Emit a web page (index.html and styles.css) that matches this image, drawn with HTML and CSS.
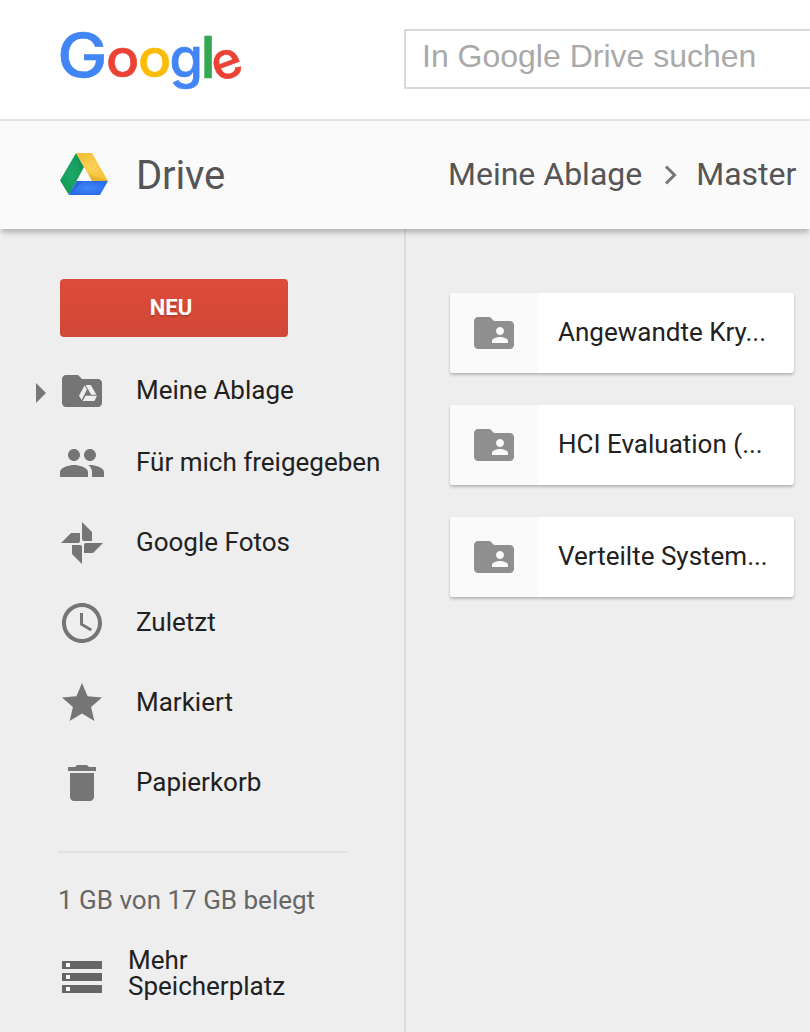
FILE: index.html
```html
<!DOCTYPE html>
<html lang="de">
<head>
<meta charset="utf-8">
<title>Master - Google Drive</title>
<link rel="stylesheet" href="styles.css">
</head>
<body>
<header class="topbar">
  <svg class="wordmark" width="190" height="80" viewBox="58 17 190 80" role="img" aria-label="Google">
    <text class="blue" transform="translate(57.200 77.300) scale(1.110 1)" font-size="60.500">G</text>
    <text class="red" transform="translate(106 77.400) scale(1.040 1)" font-size="53">o</text>
    <text class="yellow" transform="translate(138 77.400) scale(1.040 1)" font-size="53">o</text>
    <text class="blue" transform="translate(169.600 76.800) scale(1.040 1.060)" font-size="52">g</text>
    <text class="green" transform="translate(200.300 77.600) scale(1.080 1)" font-size="58">l</text>
    <text class="red" transform="translate(217.400 82.400) rotate(-20)" font-size="51">e</text>
  </svg>
  <div class="search">In Google Drive suchen</div>
</header>
<div class="toolbar">
  <div class="brand">
    <svg width="48" height="42" viewBox="0 0 48 42">
      <defs>
        <radialGradient id="g"><stop offset="0" stop-color="#1fa768"/><stop offset="1" stop-color="#129a59"/></radialGradient>
        <radialGradient id="y"><stop offset="0" stop-color="#ffd25a"/><stop offset="1" stop-color="#f5c138"/></radialGradient>
        <radialGradient id="b"><stop offset="0" stop-color="#4186fa"/><stop offset="1" stop-color="#2c6ee8"/></radialGradient>
      </defs>
      <path fill="url(#g)" d="M16 0 24 14 9 42 0 27.500z"/>
      <path fill="#0d7c48" opacity=".3" d="M16 0 24 14 21 18z"/>
      <path fill="url(#y)" d="M16 0H32L48 28H32z"/>
      <path fill="#d9a526" opacity=".5" d="M28.500 21 48 28H32z"/>
      <path fill="url(#b)" d="M16.500 28H48L40 42H9z"/>
      <path fill="#1c50bb" opacity=".35" d="M16.500 28H23L9 42z"/>
    </svg>
    <span class="product">Drive</span>
  </div>
  <nav class="crumbs">
    <span>Meine Ablage</span>
    <svg width="14" height="20" viewBox="0 0 14 20"><path d="M2 1.500 10.500 10 2 18.500" fill="none" stroke="#777" stroke-width="3"/></svg>
    <span>Master</span>
  </nav>
</div>
<div class="main">
  <aside class="sidebar">
    <div class="new">NEU</div>
    <div class="nav">
      <div class="item first">
        <svg class="expand" width="10" height="20" viewBox="0 0 10 20"><path d="M0 0 10 10 0 20z"/></svg>
        <svg class="icon" viewBox="0 0 24 24"><path d="M20 6h-8l-2-2H4c-1.100 0-2 .900-2 2v12c0 1.100.900 2 2 2h16c1.100 0 2-.900 2-2V8c0-1.100-.900-2-2-2z"/><g fill="#eee"><path d="M13.300 9.200 14.500 11.300 11.800 16.500 10.500 14.400z"/><path d="M13.800 9H16.400L19.200 13.900H16.600z"/><path d="M13.800 14.400H19.500L18.200 17H12.300z"/></g></svg>
        <span>Meine Ablage</span>
      </div>
      <div class="item"><svg class="icon" viewBox="0 0 24 24"><path d="M16 11c1.660 0 2.990-1.340 2.990-3S17.660 5 16 5s-3 1.340-3 3 1.340 3 3 3zm-8 0c1.660 0 2.990-1.340 2.990-3S9.660 5 8 5 5 6.340 5 8s1.340 3 3 3zm0 2c-2.330 0-7 1.170-7 3.500V19h14v-2.500C15 14.170 10.330 13 8 13zm8 0c-.290 0-.620.020-.970.050 1.160.840 1.970 1.970 1.970 3.450V19h6v-2.500c0-2.330-4.670-3.500-7-3.500z"/></svg><span>Für mich freigegeben</span></div>
      <div class="item"><svg class="icon" viewBox="0 0 48 48"><path d="M24 3 34 13V22H26Q24 22 24 20zM45 24 35 34H26V26Q26 24 28 24zM24 45 14 35V26H22Q24 26 24 28zM3 24 13 14H22V22Q22 24 20 24z"/></svg><span>Google Fotos</span></div>
      <div class="item"><svg class="icon" viewBox="0 0 24 24"><path d="M11.990 2C6.470 2 2 6.480 2 12s4.470 10 9.990 10C17.520 22 22 17.520 22 12S17.520 2 11.990 2zM12 20c-4.420 0-8-3.580-8-8s3.580-8 8-8 8 3.580 8 8-3.580 8-8 8zm.500-13H11v6l5.250 3.150.750-1.230-4.500-2.670z"/></svg><span>Zuletzt</span></div>
      <div class="item"><svg class="icon" viewBox="0 0 24 24"><path d="M12 17.270 18.180 21l-1.640-7.030L22 9.240l-7.190-.610L12 2 9.190 8.630 2 9.240l5.460 4.730L5.820 21z"/></svg><span>Markiert</span></div>
      <div class="item"><svg class="icon" viewBox="0 0 24 24"><path d="M6 19c0 1.100.900 2 2 2h8c1.100 0 2-.900 2-2V7H6zM19 4h-3.500l-1-1h-5l-1 1H5v2h14z"/></svg><span>Papierkorb</span></div>
    </div>
    <div class="quota">1 GB von 17 GB belegt</div>
    <div class="more">
      <svg width="40" height="32" viewBox="0 0 40 32"><path fill="#666" d="M0 0H40V8H0zM0 12H40V20H0zM0 24H40V32H0z"/><path fill="#fafafa" d="M4 2H8V6H4zM4 14H8V18H4zM4 26H8V30H4z"/></svg>
      <span>Mehr<br>Speicherplatz</span>
    </div>
  </aside>
  <section class="files">
    <div class="card"><div class="thumb"><svg class="icon" viewBox="0 0 24 24"><path d="M20 6h-8l-2-2H4c-1.100 0-2 .900-2 2v12c0 1.100.900 2 2 2h16c1.100 0 2-.900 2-2V8c0-1.100-.900-2-2-2zm-5 3c1.100 0 2 .900 2 2s-.900 2-2 2-2-.900-2-2 .900-2 2-2zm4 8h-8v-1c0-1.330 2.670-2 4-2s4 .670 4 2v1z"/></svg></div><span class="name">Angewandte Kry...</span></div>
    <div class="card"><div class="thumb"><svg class="icon" viewBox="0 0 24 24"><path d="M20 6h-8l-2-2H4c-1.100 0-2 .900-2 2v12c0 1.100.900 2 2 2h16c1.100 0 2-.900 2-2V8c0-1.100-.900-2-2-2zm-5 3c1.100 0 2 .900 2 2s-.900 2-2 2-2-.900-2-2 .900-2 2-2zm4 8h-8v-1c0-1.330 2.670-2 4-2s4 .670 4 2v1z"/></svg></div><span class="name">HCI Evaluation (...</span></div>
    <div class="card"><div class="thumb"><svg class="icon" viewBox="0 0 24 24"><path d="M20 6h-8l-2-2H4c-1.100 0-2 .900-2 2v12c0 1.100.900 2 2 2h16c1.100 0 2-.900 2-2V8c0-1.100-.900-2-2-2zm-5 3c1.100 0 2 .900 2 2s-.900 2-2 2-2-.900-2-2 .900-2 2-2zm4 8h-8v-1c0-1.330 2.670-2 4-2s4 .670 4 2v1z"/></svg></div><span class="name">Verteilte System...</span></div>
  </section>
</div>
</body>
</html>
```
FILE: styles.css
```css
* { box-sizing: border-box; }
body {
  margin: 0;
  height: 1032px;
  display: flex;
  flex-direction: column;
  overflow: hidden;
  background: #eee;
  color: #212121;
  font: 26px/30px Roboto, sans-serif;
}
svg { display: block; flex: none; }
span { white-space: nowrap; }

.topbar {
  display: flex;
  align-items: flex-start;
  flex: none;
  height: 121px;
  border-bottom: 2px solid #e5e5e5;
  background: #fff;
}
.wordmark { margin: 17px 156px 0 58px; overflow: visible; font-family: Inter, sans-serif; font-weight: 500; }
.blue { fill: #4285f4; stroke: #4285f4; }
.red { fill: #ea4335; stroke: #ea4335; }
.yellow { fill: #fbbc05; stroke: #fbbc05; }
.green { fill: #34a853; stroke: #34a853; }
.wordmark text { stroke-width: .6px; }
.search {
  flex: 1;
  height: 60px;
  margin-top: 29px;
  padding-left: 16px;
  border: 2px solid #d9d9d9;
  border-right: 0;
  color: #a9a9a9;
  font: 32px/50px "Liberation Sans", Arial, sans-serif;
  white-space: nowrap;
}

.toolbar {
  position: relative;
  display: flex;
  flex: none;
  height: 108px;
  background: #fafafa;
  box-shadow: 0 4px 6px -1px rgba(0, 0, 0, .28);
  color: #555;
}
.brand { display: flex; align-items: center; width: 448px; padding-left: 60px; gap: 28px; }
.brand svg { margin-top: -2px; }
.product { font-size: 40px; line-height: 108px; padding-top: 2px; letter-spacing: -.15px; }
.crumbs { display: flex; align-items: center; font-size: 32px; padding-bottom: 2px; }
.crumbs svg { margin: 2px 18px 0 22px; }

.main { display: flex; flex: 1; min-height: 0; }
.sidebar { width: 406px; flex: none; border-right: 2px solid #dcdcdc; padding-top: 50px; }
.new {
  width: 228px;
  height: 58px;
  margin: 0 0 22px 60px;
  padding-right: 6px;
  border-radius: 4px;
  background: linear-gradient(#dd4b39, #d14836);
  color: #fff;
  font-size: 22px;
  font-weight: 700;
  line-height: 57px;
  text-align: center;
  text-shadow: 0 2px 1px rgba(0, 0, 0, .15);
}
.nav { padding-bottom: 28px; }
.item { display: flex; align-items: center; height: 80px; padding-left: 58px; }
.item span { margin: -2px 0 0 30px; }
.item.first { height: 64px; padding-left: 36px; }
.expand { margin-top: 4px; fill: #777; }
.expand + .icon { margin-left: 12px; }
.icon { width: 48px; height: 48px; fill: #757575; }
.quota { width: 289px; margin-left: 58px; padding-top: 32px; border-top: 2px solid #e2e2e2; color: #666; white-space: nowrap; }
.more { display: flex; align-items: center; margin: 32px 0 0 62px; gap: 26px; line-height: 26px; }
.more svg { margin-top: 8px; }

.files { flex: 1; padding: 64px 16px 0 44px; }
.card {
  display: flex;
  align-items: center;
  height: 80px;
  margin-bottom: 32px;
  border-radius: 3px;
  overflow: hidden;
  background: #fff;
  box-shadow: 0 2px 3px rgba(0, 0, 0, .24);
}
.thumb { display: flex; align-items: center; justify-content: center; width: 88px; height: 80px; background: #fafafa; }
.thumb .icon { fill: #8f8f8f; }
.name { margin: -2px 0 0 20px; }
```
